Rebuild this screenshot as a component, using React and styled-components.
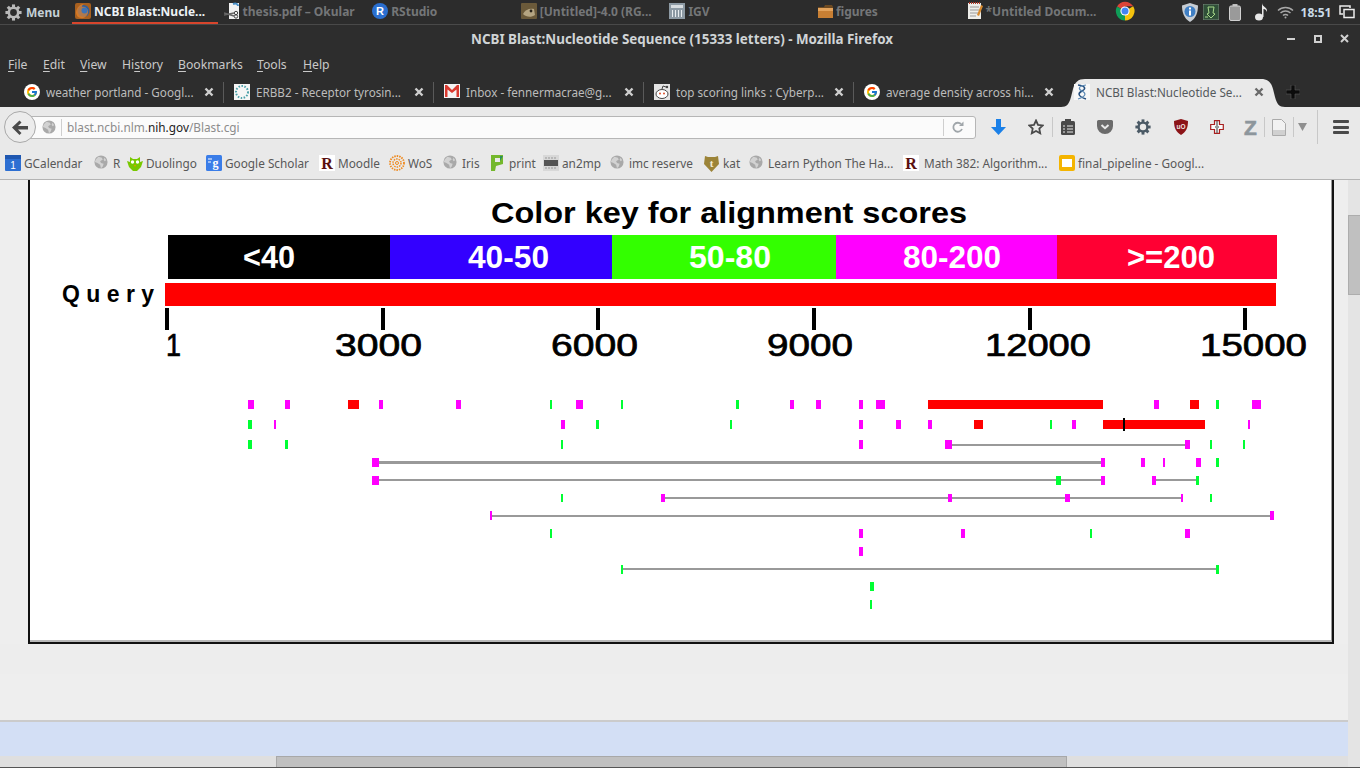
import React from 'react'
import styled, { createGlobalStyle } from 'styled-components'
import { FcGoogle } from 'react-icons/fc'

const Global = createGlobalStyle`
  html, body {
    margin: 0;
    padding: 0;
    overflow: hidden;
    background: #2d2d2d;
  }
`

const Screen = styled.div`
  display: flex;
  flex-direction: column;
  width: 1360px;
  height: 768px;
  overflow: hidden;
  font-family: 'Noto Sans', 'Open Sans', sans-serif;
`

/* desktop panel */
const Panel = styled.div`
  display: flex;
  align-items: center;
  height: 24px;
  background: #2c2c2c;
  border-bottom: 1px solid #494949;
  flex: none;
`
const MenuButton = styled.div`
  display: flex;
  align-items: center;
  gap: 4px;
  width: 72px;
  padding-left: 5px;
  box-sizing: border-box;
  font-size: 12px;
  font-weight: 700;
  color: #c4d0d6;
  flex: none;
`
const Task = styled.div`
  display: flex;
  align-items: center;
  gap: 3px;
  width: ${(p) => p.$w || 146}px;
  height: 24px;
  margin-right: 2.6px;
  box-sizing: border-box;
  padding-left: 3px;
  font-size: 12px;
  font-weight: 700;
  color: ${(p) => (p.$active ? '#eef3f6' : '#747678')};
  border-bottom: 2px solid ${(p) => (p.$active ? '#d8452c' : 'transparent')};
  white-space: nowrap;
  flex: none;
`
const Tray = styled.div`
  display: flex;
  align-items: center;
  margin-left: auto;
  padding-right: 2px;
  flex: none;
`
const TraySlot = styled.div`
  display: flex;
  align-items: center;
  justify-content: center;
  width: ${(p) => p.$w}px;
`
const Clock = styled.span`
  font-size: 12px;
  font-weight: 700;
  color: #c9dbe8;
`

/* firefox window */
const TitleBar = styled.div`
  display: flex;
  align-items: center;
  height: 27px;
  background: #2d2d2d;
  flex: none;
`
const WindowTitle = styled.div`
  width: 1278px;
  padding-left: 86px;
  box-sizing: border-box;
  text-align: center;
  font-size: 13.4px;
  font-weight: 700;
  color: #d0d4d6;
`
const WindowButton = styled.div`
  display: flex;
  align-items: center;
  justify-content: center;
  width: 26.5px;
`
const MenuBar = styled.div`
  display: flex;
  align-items: center;
  height: 26px;
  box-sizing: border-box;
  padding: 0 0 2px 8px;
  background: #2d2d2d;
  font-size: 12.2px;
  color: #c9c9c9;
  flex: none;
`
const MenuEntry = styled.span`
  width: ${(p) => p.$w}px;
  u {
    text-underline-offset: 2px;
  }
`
const TabStrip = styled.div`
  display: flex;
  height: 29px;
  padding-left: 14px;
  background: #2d2d2d;
  flex: none;
`
const Tab = styled.div`
  position: relative;
  display: flex;
  align-items: center;
  width: 210px;
  height: 28px;
  box-sizing: border-box;
  padding-left: 10px;
  font-size: 11.7px;
  color: ${(p) => (p.$active ? '#55595c' : '#bcbcbc')};
`
const TabShape = styled.svg`
  position: absolute;
  left: -3px;
  top: 0;
  width: 224px;
  height: 29px;
`
const TabIcon = styled.span`
  position: relative;
  display: flex;
  width: 16px;
  height: 16px;
  margin-right: 6px;
  flex: none;
`
const TabTitle = styled.span`
  position: relative;
  flex: 1;
  white-space: nowrap;
  overflow: hidden;
`
const TabClose = styled.svg`
  position: relative;
  width: 10px;
  height: 10px;
  margin-right: 9px;
  flex: none;
`
const TabDivider = styled.span`
  width: 1px;
  height: 21px;
  background: ${(p) => (p.$hidden ? 'transparent' : '#5a5a5a')};
  flex: none;
`
const NewTab = styled.div`
  display: flex;
  align-items: center;
  margin-left: 12px;
  height: 28px;
`

/* toolbar */
const NavBar = styled.div`
  display: flex;
  align-items: center;
  height: 41px;
  box-sizing: border-box;
  padding: 0 0 1px 4px;
  background: #e9e9e9;
  flex: none;
`
const BackButton = styled.div`
  position: relative;
  z-index: 1;
  display: flex;
  align-items: center;
  justify-content: center;
  width: 30px;
  height: 30px;
  border: 1px solid #a9a9a9;
  border-radius: 50%;
  background: #ececec;
  flex: none;
`
const UrlBar = styled.div`
  display: flex;
  align-items: center;
  width: 946px;
  height: 23px;
  margin-left: -6px;
  padding-left: 11px;
  box-sizing: border-box;
  background: #fbfbfb;
  border: 1px solid #b6b6b6;
  border-radius: 0 3px 3px 0;
  font-size: 11.8px;
  color: #8c8c8c;
  flex: none;
`
const UrlDivider = styled.span`
  width: 1px;
  height: 17px;
  margin: ${(p) => p.$margin};
  background: #cfcfcf;
  flex: none;
`
const UrlText = styled.span`
  flex: 1;
  margin-left: -1px;
  b {
    font-weight: 400;
    color: #222;
  }
`
const ToolSlot = styled.div`
  display: flex;
  align-items: center;
  justify-content: center;
  width: ${(p) => p.$w}px;
  flex: none;
`
const ToolDivider = styled.span`
  width: 1px;
  height: ${(p) => p.$h || 20}px;
  background: #c8c8c8;
  flex: none;
`
const ZLetter = styled.span`
  margin-left: 6px;
  font-family: 'Liberation Sans', sans-serif;
  font-size: 21px;
  font-weight: 700;
  line-height: 1;
  color: #8d969c;
  -webkit-text-stroke: 0.6px #8d969c;
`

/* bookmarks */
const Bookmarks = styled.div`
  display: flex;
  align-items: center;
  height: 32px;
  box-sizing: border-box;
  padding: 0 0 2px 5px;
  background: #e9e9e9;
  border-bottom: 1px solid #b4b4b4;
  font-size: 11.8px;
  color: #585858;
  flex: none;
`
const Bookmark = styled.div`
  display: flex;
  align-items: center;
  gap: ${(p) => p.$gap || 3}px;
  width: ${(p) => p.$w}px;
  white-space: nowrap;
  flex: none;
`
const Favicon = styled.span`
  display: flex;
  width: 16px;
  height: 16px;
  flex: none;
`

/* page */
const Viewport = styled.div`
  display: flex;
  flex: 1;
  min-height: 0;
`
const PageColumn = styled.div`
  display: flex;
  flex-direction: column;
  width: 1348px;
  flex: none;
`
const Page = styled.div`
  height: 540px;
  background: #eeeeee;
  flex: none;
`
const Frame = styled.div`
  width: 1306px;
  margin-left: 28px;
  box-sizing: border-box;
  background: #fff;
  border-left: 2px solid #111;
  border-right: 2px solid #111;
  border-bottom: 2px solid #111;
`
const Graphic = styled.svg`
  display: block;
  width: 1301px;
  height: 460px;
  border-right: 1px solid #9a9a9a;
  border-bottom: 2px solid #b9b9b9;
`
const PageBand = styled.div`
  height: 30px;
  background: #ededed;
`
const Footer = styled.div`
  height: 34px;
  background: #d3dff5;
  border-top: 2px solid #cbcbcb;
  flex: none;
`
const HScroll = styled.div`
  display: flex;
  height: 11px;
  padding-left: 276px;
  background: #dfdfdf;
  border-bottom: 1px solid #555;
  flex: none;
`
const HThumb = styled.div`
  width: 791px;
  background: #c0c0c0;
  border: 1px solid #a8a8a8;
  border-bottom: 0;
  box-sizing: border-box;
`
const VScroll = styled.div`
  flex: 1;
  padding-top: 35px;
  background: #e4e4e4;
  border-bottom: 1px solid #555;
`
const VThumb = styled.div`
  height: 80px;
  background: #c0c0c0;
  border: 1px solid #adadad;
  border-right: 0;
  box-sizing: border-box;
`

const KEY = [
  [168, 390, '#000000', '<40', 243, 52],
  [390, 612, '#3300ff', '40-50', 468, 81],
  [612, 836, '#33ff00', '50-80', 689, 82],
  [836, 1057, '#ff00ff', '80-200', 903, 98],
  [1057, 1277, '#ff0033', '>=200', 1127, 88],
]
const TICKS = [
  [167, '1', 166, 15],
  [383, '3000', 335, 87],
  [598, '6000', 551, 87],
  [814, '9000', 767, 86],
  [1030, '12000', 985, 106],
  [1245, '15000', 1200, 107],
]

const M = '#ff00ff'
const G = '#00ff33'
const R = '#ff0000'
// each row: top of the hits, grey connecting lines [x0, x1, y, h], hits [x0, x1, colour]
const ROWS = [
  { y: 400, lines: [], hits: [[248, 254, M], [285, 290, M], [348, 359, R], [379, 383, M], [456, 461, M], [550, 552, G], [576, 583, M], [621, 623, G], [736, 739, G], [790, 794, M], [816, 821, M], [859, 863, M], [876, 885, M], [928, 1103, R], [1154, 1159, M], [1190, 1199, R], [1216, 1219, G], [1252, 1261, M]] },
  { y: 420, lines: [], hits: [[248, 252, G], [274, 276, M], [561, 565, M], [596, 599, G], [730, 732, G], [859, 863, M], [896, 901, M], [928, 932, M], [974, 983, R], [1050, 1052, G], [1072, 1076, M], [1103, 1205, R], [1248, 1250, M]] },
  { y: 440, lines: [[952, 1185, 444, 2]], hits: [[248, 252, G], [285, 288, G], [561, 563, G], [859, 863, M], [945, 952, M], [1185, 1190, M], [1210, 1212, G], [1243, 1245, G]] },
  { y: 458, lines: [[379, 1101, 461, 3]], hits: [[372, 379, M], [1101, 1105, M], [1141, 1145, M], [1163, 1165, M], [1196, 1201, M], [1216, 1219, G]] },
  { y: 476, lines: [[379, 1101, 479, 2], [1156, 1196, 479, 2]], hits: [[372, 379, M], [1056, 1061, G], [1101, 1105, M], [1152, 1156, M], [1196, 1199, G]] },
  { y: 494, h: 8, lines: [[665, 1181, 497, 2]], hits: [[561, 563, G], [661, 665, M], [948, 952, M], [1065, 1070, M], [1181, 1183, M], [1210, 1212, G]] },
  { y: 511, lines: [[492, 1270, 515, 2]], hits: [[490, 492, M], [1270, 1274, M]] },
  { y: 529, lines: [], hits: [[550, 552, G], [859, 863, M], [961, 965, M], [1090, 1092, G], [1185, 1190, M]] },
  { y: 547, lines: [], hits: [[859, 863, M]] },
  { y: 565, lines: [[623, 1216, 568, 2]], hits: [[621, 623, G], [1216, 1219, G]] },
  { y: 582, lines: [], hits: [[870, 874, G]] },
  { y: 600, lines: [], hits: [[870, 872, G]] },
]

const HEAVY = { fontFamily: "'Liberation Sans', sans-serif", fontWeight: 700 }

function AlignmentGraphic() {
  return (
    <Graphic viewBox="30 180 1301 460" shapeRendering="crispEdges">
      <text x="491" y="223" fontSize="29" textLength="476" lengthAdjust="spacingAndGlyphs" style={HEAVY}>
        Color key for alignment scores
      </text>
      {KEY.map(([x0, x1, fill, label, tx, tw]) => (
        <g key={label}>
          <rect x={x0} y="235" width={x1 - x0} height="44" fill={fill} />
          <text x={tx} y="268" fontSize="32" fill="#fff" textLength={tw} lengthAdjust="spacingAndGlyphs" style={HEAVY}>
            {label}
          </text>
        </g>
      ))}
      <text x="62" y="302" fontSize="23" textLength="92" lengthAdjust="spacing" style={HEAVY}>
        Query
      </text>
      <rect x="165" y="283" width="1111" height="23" fill="#ff0000" />
      {TICKS.map(([x, label, tx, tw]) => (
        <g key={label}>
          <rect x={x - 2} y="308" width="4" height="22" fill="#000" />
          <text
            x={tx}
            y="356"
            fontSize="31"
            stroke="#000"
            strokeWidth="0.7"
            textLength={tw}
            lengthAdjust="spacingAndGlyphs"
            fontFamily="'Liberation Sans', sans-serif"
          >
            {label}
          </text>
        </g>
      ))}
      {ROWS.map((row) => (
        <g key={row.y}>
          {row.lines.map(([x0, x1, y, h]) => (
            <rect key={x0} x={x0} y={y} width={x1 - x0} height={h} fill="#999999" />
          ))}
          {row.hits.map(([x0, x1, fill]) => (
            <rect key={x0} x={x0} y={row.y} width={x1 - x0} height={row.h || 9} fill={fill} />
          ))}
        </g>
      ))}
      <rect x="1123" y="418" width="2" height="13" fill="#000" />
    </Graphic>
  )
}

/* icons */
const Globe = ({ size = 14 }) => (
  <svg width={size} height={size} viewBox="0 0 16 16">
    <circle cx="8" cy="8" r="7.5" fill="#a9a9a9" />
    <path d="M5 2l4 1 1 2-3 2 1 2 3 1-1 3-2 2-1-4-3-2-3-1 1-3z" fill="#d2d2d2" />
    <path d="M12 3l2 3-2 1-1-2z" fill="#d2d2d2" />
  </svg>
)
const Gear = ({ size = 17, color = '#b9b9b9' }) => (
  <svg width={size} height={size} viewBox="0 0 20 20">
    <circle cx="10" cy="10" r="5.5" fill="none" stroke={color} strokeWidth="3" />
    {[0, 45, 90, 135, 180, 225, 270, 315].map((a) => (
      <rect key={a} x="8.2" y="0.5" width="3.6" height="4" fill={color} transform={`rotate(${a} 10 10)`} />
    ))}
  </svg>
)
const Firefox = () => (
  <svg width="16" height="16" viewBox="0 0 16 16">
    <rect width="16" height="16" rx="2" fill="#a8601f" />
    <circle cx="8.500" cy="8" r="6" fill="#2f5f9e" />
    <path d="M1 9c1-5 4-8 8-8-2 1-2 2-2 3 3-1 7 2 6 6-1 3-4 6-7 5-3 0-5-3-5-6z" fill="#e8842a" opacity=".7" />
    <circle cx="9.500" cy="7.500" r="3" fill="#3f73b5" />
  </svg>
)
const Okular = () => (
  <svg width="16" height="18" viewBox="0 0 16 18">
    <path d="M5 1h10v16H5z" fill="#f2f2f2" />
    <path d="M9 2c3-1 5 0 5 2" fill="none" stroke="#4a90c8" strokeWidth="2" />
    <path d="M0 13l10-2M0 11l10 3" stroke="#666" strokeWidth="1.4" />
    <circle cx="12" cy="11" r="1.7" fill="none" stroke="#444" />
    <circle cx="12" cy="14.500" r="1.7" fill="none" stroke="#444" />
  </svg>
)
const RBadge = () => (
  <svg width="16" height="16" viewBox="0 0 16 16">
    <circle cx="8" cy="8" r="8" fill="#2a6fd0" />
    <text x="8" y="12" fontSize="11" fontWeight="700" textAnchor="middle" fill="#fff" fontFamily="'Liberation Sans', sans-serif">
      R
    </text>
  </svg>
)
const Gimp = () => (
  <svg width="16" height="16" viewBox="0 0 16 16">
    <rect width="16" height="16" rx="1" fill="#6b5a3a" />
    <path d="M2 11c2-4 6-6 11-5l1 6c-4 3-9 2-12-1z" fill="#b5a582" />
    <circle cx="10" cy="8" r="1.4" fill="#2a241a" />
  </svg>
)
const Igv = () => (
  <svg width="16" height="16" viewBox="0 0 16 16">
    <rect width="16" height="16" fill="#8d9aa4" />
    <rect x="2" y="2" width="12" height="3" fill="#d8dde0" />
    <path d="M3 7h1v7H3zM6 7h1v7H6zM9 7h1v7H9zM12 7h1v7h-1z" fill="#e8ecef" />
  </svg>
)
const Folder = () => (
  <svg width="15" height="15" viewBox="0 0 15 15">
    <path d="M0 3h6l1-2h7l1 2v11H0z" fill="#6d4a22" />
    <rect y="4" width="15" height="10" fill="#c87f33" />
    <rect y="4" width="15" height="3" fill="#e3a35c" />
  </svg>
)
const Notes = () => (
  <svg width="16" height="18" viewBox="0 0 16 18">
    <rect x="1" y="1" width="13" height="16" fill="#eeeeea" />
    <path d="M3 5h9M3 8h9M3 11h9M3 14h6" stroke="#9a9a9a" />
    <path d="M10 13l4-10 2 1-4 10z" fill="#d88a2e" />
    <path d="M2 1h11" stroke="#b03a2a" strokeWidth="2" strokeDasharray="1 1" />
  </svg>
)
const Chrome = () => (
  <svg width="20" height="20" viewBox="0 0 20 20">
    <path d="M10 10L2 5.400A9.500 9.500 0 0 1 18.200 5.200H10z" fill="#db4437" />
    <path d="M10 10l8.200-4.800A9.500 9.500 0 0 1 10 19.500z" fill="#f4c20d" />
    <path d="M10 10v9.500A9.500 9.500 0 0 1 2 5.400z" fill="#0f9d58" />
    <circle cx="10" cy="10" r="4.600" fill="#fff" />
    <circle cx="10" cy="10" r="3.500" fill="#4285f4" />
  </svg>
)
const InfoShield = () => (
  <svg width="16" height="19" viewBox="0 0 16 19">
    <path d="M8 0l8 2.500c0 7-2 13-8 16.500C2 15.500 0 9.500 0 2.500z" fill="#c6ccd2" />
    <circle cx="8" cy="8.500" r="5.500" fill="#3f7fc4" />
    <path d="M7 4.500h2v2H7zM7 7.500h2v5H7z" fill="#fff" />
  </svg>
)
const GreenTray = () => (
  <svg width="16" height="16" viewBox="0 0 16 16">
    <rect width="16" height="16" fill="#2f4f38" stroke="#7b8a7c" />
    <path d="M5 3h6l-1 6 2 1-4 4-4-4 2-1z" fill="none" stroke="#a8d98a" />
    <path d="M2 13h3" stroke="#a8d98a" />
  </svg>
)
const Battery = () => (
  <svg width="12" height="17" viewBox="0 0 12 17">
    <rect x="3.500" y="0" width="5" height="2" fill="#bcbcbc" />
    <rect x="0.500" y="2" width="11" height="14.500" rx="1.500" fill="#9a9a9a" stroke="#d0d0d0" />
  </svg>
)
const Note = () => (
  <svg width="13" height="18" viewBox="0 0 13 18">
    <ellipse cx="4" cy="14" rx="4" ry="3.500" fill="#e8e8e8" />
    <path d="M7 14V0c0 4 6 4 5 9-1-3-3-3-3.500-3V14z" fill="#e8e8e8" />
  </svg>
)
const WifiIcon = () => (
  <svg width="17" height="13" viewBox="0 0 17 13" fill="none" stroke="#a8a8a8" strokeWidth="1.500">
    <path d="M1 4.500a11 11 0 0 1 15 0M3.500 7a7.500 7.500 0 0 1 10 0M6 9.500a3.500 3.500 0 0 1 5 0" />
    <circle cx="8.500" cy="11.500" r="1" fill="#a8a8a8" stroke="none" />
  </svg>
)
const Windows = () => (
  <svg width="16" height="14" viewBox="0 0 16 14" fill="none" stroke="#ececec" strokeWidth="1.500">
    <path d="M11 3V1H1v8h3" />
    <rect x="5" y="4.500" width="10" height="8" />
  </svg>
)
const Close = ({ color = '#cfcfcf' }) => (
  <TabClose viewBox="0 0 10 10">
    <path d="M1.500 1.500l7 7M8.500 1.500l-7 7" stroke={color} strokeWidth="2.400" />
  </TabClose>
)
const GoogleG = () => (
  <svg width="16" height="16" viewBox="0 0 16 16">
    <circle cx="8" cy="8" r="8" fill="#fff" />
    <foreignObject x="2" y="2" width="12" height="12">
      <FcGoogle size={12} style={{ display: 'block' }} />
    </foreignObject>
  </svg>
)
const Erbb = () => (
  <svg width="16" height="16" viewBox="0 0 16 16">
    <rect width="16" height="16" fill="#f6f6f6" />
    <circle cx="8" cy="8" r="6" fill="none" stroke="#4aa0a8" strokeWidth="2" strokeDasharray="1.500 1.500" />
  </svg>
)
const Gmail = () => (
  <svg width="16" height="14" viewBox="0 0 16 14">
    <rect width="16" height="14" fill="#f4f4f4" />
    <path d="M1 1h2l5 5 5-5h2v12h-2.500V5.500L8 9 3.500 5.500V13H1z" fill="#d93a30" />
  </svg>
)
const Reddit = () => (
  <svg width="16" height="16" viewBox="0 0 16 16">
    <rect width="16" height="16" fill="#e4e4e4" />
    <ellipse cx="8" cy="10" rx="6" ry="4.500" fill="#fff" stroke="#444" />
    <circle cx="6" cy="9.500" r="1" fill="#d9502c" />
    <circle cx="10" cy="9.500" r="1" fill="#d9502c" />
    <path d="M8 5l1-3 3 1" fill="none" stroke="#444" />
    <circle cx="13" cy="3" r="1.200" fill="#444" />
  </svg>
)
const Helix = () => (
  <svg width="16" height="16" viewBox="0 0 16 16">
    <rect width="16" height="16" fill="#f8f8f8" />
    <path d="M4 1c8 1 8 4 4 6s-5 5 4 8" fill="none" stroke="#27507f" strokeWidth="1.500" />
    <path d="M12 1C4 2 4 5 8 7s5 5-4 8" fill="none" stroke="#5e8bb5" strokeWidth="1.200" />
  </svg>
)
const PlusBlack = () => (
  <svg width="14" height="14" viewBox="0 0 14 14">
    <path d="M5 0h4v5h5v4H9v5H5V9H0V5h5z" fill="#0c0c0c" stroke="#5a5a5a" strokeWidth=".6" />
  </svg>
)
const ArrowBack = () => (
  <svg width="16" height="15" viewBox="0 0 16 15">
    <path d="M7.500 0.500l2 2-3.500 3.500H16v3.500H6l3.500 3.500-2 2L0 7.500z" fill="#4a4a4a" />
  </svg>
)
const Reload = () => (
  <svg width="12" height="13" viewBox="0 0 12 13" fill="none">
    <path d="M10 8a4.500 4.500 0 1 1-1-5" stroke="#a0a6aa" strokeWidth="1.800" />
    <path d="M7 5h4.500V0.500z" fill="#a0a6aa" />
  </svg>
)
const DownloadArrow = () => (
  <svg width="15" height="16" viewBox="0 0 15 16">
    <path d="M5 0h5v8h5l-7.500 8L0 8h5z" fill="#1a80e8" />
  </svg>
)
const Star = () => (
  <svg width="16" height="16" viewBox="0 0 16 16">
    <path
      d="M8 1.500l2 4.300 4.700.6-3.400 3.200.9 4.700L8 12l-4.200 2.300.9-4.700L1.300 6.400 6 5.800z"
      fill="none"
      stroke="#4a4a4a"
      strokeWidth="1.800"
    />
  </svg>
)
const Clipboard = () => (
  <svg width="14" height="16" viewBox="0 0 14 16">
    <rect y="2" width="14" height="14" rx="1.500" fill="#4a4a4a" />
    <rect x="4" width="6" height="4" fill="#4a4a4a" />
    <path d="M2 7h2M6 7h6M2 10h2M6 10h6M2 13h2M6 13h6" stroke="#e9e9e9" />
  </svg>
)
const Pocket = () => (
  <svg width="16" height="14" viewBox="0 0 16 14">
    <path d="M0 1.500A1.500 1.500 0 0 1 1.500 0h13A1.500 1.500 0 0 1 16 1.500V6a8 8 0 0 1-16 0z" fill="#6b6b6b" />
    <path d="M4.500 5L8 8.200 11.500 5" fill="none" stroke="#e9e9e9" strokeWidth="2" />
  </svg>
)
const UBlock = () => (
  <svg width="14" height="16" viewBox="0 0 14 16">
    <path d="M7 0l7 2c0 7-2 11-7 14C2 13 0 9 0 2z" fill="#8c1418" />
    <text x="7" y="10" fontSize="6.500" fontWeight="700" textAnchor="middle" fill="#f2e4e4" fontFamily="'Liberation Sans', sans-serif">
      uO
    </text>
  </svg>
)
const RedCross = () => (
  <svg width="14" height="14" viewBox="0 0 14 14">
    <path d="M4.500 .7h5v3.800h3.800v5H9.500v3.800h-5V9.500H.7v-5h3.800z" fill="#fafafa" stroke="#a82020" strokeWidth="1.200" />
    <path d="M7 1v12" stroke="#555" strokeWidth="1.200" />
    <rect x="5" y="6" width="4" height="2" fill="#999" />
  </svg>
)
const PageIcon = () => (
  <svg width="14" height="17" viewBox="0 0 14 17">
    <path d="M.5.500h9l4 4v12H.5z" fill="#f2f2f2" stroke="#aaa" />
    <path d="M1 11h12v5H1z" fill="#d0d0d0" />
  </svg>
)
const Triangle = () => (
  <svg width="9" height="8" viewBox="0 0 9 8">
    <path d="M0 0h9L4.500 8z" fill="#8f8f8f" />
  </svg>
)
const HamburgerBar = styled.span`
  display: block;
  width: 16px;
  height: 3px;
  border-radius: 1px;
  background: #4a4a4a;
`
const HamburgerStack = styled.div`
  display: flex;
  flex-direction: column;
  gap: 2.500px;
`
const RLogo = () => (
  <svg width="16" height="16" viewBox="0 0 16 16">
    <rect width="16" height="16" fill="#fff" />
    <text x="8" y="14" fontSize="16" fontWeight="700" textAnchor="middle" fill="#5a1010" fontFamily="'Liberation Serif', serif">
      R
    </text>
  </svg>
)
const Calendar = () => (
  <svg width="16" height="16" viewBox="0 0 16 16">
    <rect width="16" height="16" rx="1" fill="#2d6fd2" />
    <rect width="16" height="4" fill="#1f57b0" />
    <text x="8" y="14" fontSize="10" textAnchor="middle" fill="#fff" fontFamily="'Liberation Sans', sans-serif">
      1
    </text>
  </svg>
)
const Duolingo = () => (
  <svg width="16" height="16" viewBox="0 0 16 16">
    <path d="M0 6l3 1V2l3 2h4l3-2v5l3-1-2 6-4 4H6l-4-4z" fill="#78c800" />
    <circle cx="5.500" cy="7" r="1.700" fill="#fff" />
    <circle cx="10.500" cy="7" r="1.700" fill="#fff" />
    <path d="M7 10h2l-1 2z" fill="#f49000" />
  </svg>
)
const Scholar = () => (
  <svg width="16" height="16" viewBox="0 0 16 16">
    <rect width="16" height="16" rx="1.500" fill="#3a7de8" />
    <text x="9.500" y="12" fontSize="12" fontWeight="700" textAnchor="middle" fill="#fff" fontFamily="'Liberation Serif', serif">
      g
    </text>
    <path d="M2 4h4M2 7h3" stroke="#fff" />
  </svg>
)
const Wos = () => (
  <svg width="16" height="16" viewBox="0 0 16 16" fill="none" stroke="#ef8a1f">
    <circle cx="8" cy="8" r="7" strokeWidth="1.800" strokeDasharray="1.500 1" />
    <circle cx="8" cy="8" r="4" strokeWidth="1.500" strokeDasharray="1.500 1" />
    <circle cx="8" cy="8" r="1.500" />
  </svg>
)
const Print = () => (
  <svg width="14" height="16" viewBox="0 0 14 16">
    <path d="M1 0h12v9L6 11l-1 5H1z" fill="#74b82c" />
    <path d="M5 3h5v4H5z" fill="#e9e9e9" />
    <path d="M10 1l3 0-3 5z" fill="#2c8f5a" />
  </svg>
)
const An2mp = () => (
  <svg width="16" height="16" viewBox="0 0 16 16">
    <rect width="16" height="16" fill="#d8d8d8" />
    <rect x="1" y="5" width="14" height="6" fill="#555" />
    <path d="M2 3h12M2 13h12" stroke="#999" strokeDasharray="2 1" />
  </svg>
)
const Kat = () => (
  <svg width="15" height="17" viewBox="0 0 15 17">
    <path d="M1 1l3 1h7l3-1 1 8-7.500 8L0 9z" fill="#9c8438" />
    <text x="7.500" y="12" fontSize="11" fontWeight="700" textAnchor="middle" fill="#f2ecd6" fontFamily="'Liberation Serif', serif">
      t
    </text>
  </svg>
)
const Slides = () => (
  <svg width="16" height="16" viewBox="0 0 16 16">
    <rect width="16" height="16" rx="2" fill="#f4b400" />
    <rect x="3" y="4" width="10" height="8" fill="#fff" />
  </svg>
)

const TASKS = [
  [<Firefox key="i" />, 'NCBI Blast:Nucle...', true],
  [<Okular key="i" />, 'thesis.pdf – Okular'],
  [<RBadge key="i" />, 'RStudio'],
  [<Gimp key="i" />, '[Untitled]-4.0 (RG...'],
  [<Igv key="i" />, 'IGV'],
  [<Folder key="i" />, 'figures'],
  [<Notes key="i" />, '*Untitled Docum...'],
  [<Chrome key="i" />, '', false, 40],
]
const MENUS = [
  [35, 'F', 'ile'],
  [37, 'E', 'dit'],
  [42, 'V', 'iew'],
  [56, 'Hi', 'story', 's'],
  [79, 'B', 'ookmarks'],
  [46, 'T', 'ools'],
  [30, 'H', 'elp'],
]
const TABS = [
  [<GoogleG key="i" />, 'weather portland - Googl...'],
  [<Erbb key="i" />, 'ERBB2 - Receptor tyrosin...'],
  [<Gmail key="i" />, 'Inbox - fennermacrae@g...'],
  [<Reddit key="i" />, 'top scoring links : Cyberp...'],
  [<GoogleG key="i" />, 'average density across hi...'],
]
const BOOKMARKS = [
  [<Calendar key="i" />, 'GCalendar', 89],
  [<Globe key="i" />, 'R', 33],
  [<Duolingo key="i" />, 'Duolingo', 79],
  [<Scholar key="i" />, 'Google Scholar', 113],
  [<RLogo key="i" />, 'Moodle', 70],
  [<Wos key="i" />, 'WoS', 54],
  [<Globe key="i" />, 'Iris', 47],
  [<Print key="i" />, 'print', 53],
  [<An2mp key="i" />, 'an2mp', 67],
  [<Globe key="i" />, 'imc reserve', 94],
  [<Kat key="i" />, 'kat', 45],
  [<Globe key="i" />, 'Learn Python The Ha...', 154],
  [<RLogo key="i" />, 'Math 382: Algorithm...', 156, 5],
  [<Slides key="i" />, 'final_pipeline - Googl...', 150],
]

export default function App() {
  return (
    <Screen>
      <Global />
      <Panel>
        <MenuButton>
          <Gear />
          Menu
        </MenuButton>
        {TASKS.map(([icon, label, active, w], index) => (
          <Task key={index} $active={active} $w={w}>
            {icon}
            {label}
          </Task>
        ))}
        <Tray>
          <TraySlot $w={20}><InfoShield /></TraySlot>
          <TraySlot $w={22}><GreenTray /></TraySlot>
          <TraySlot $w={26}><Battery /></TraySlot>
          <TraySlot $w={26}><Note /></TraySlot>
          <TraySlot $w={22}><WifiIcon /></TraySlot>
          <TraySlot $w={40}><Clock>18:51</Clock></TraySlot>
          <TraySlot $w={22}><Windows /></TraySlot>
        </Tray>
      </Panel>
      <TitleBar>
        <WindowTitle>NCBI Blast:Nucleotide Sequence (15333 letters) - Mozilla Firefox</WindowTitle>
        <WindowButton>
          <svg width="8" height="2"><rect width="8" height="2" fill="#d0d0d0" /></svg>
        </WindowButton>
        <WindowButton>
          <svg width="8" height="8"><rect x="1" y="1" width="6" height="6" fill="none" stroke="#d0d0d0" strokeWidth="2" /></svg>
        </WindowButton>
        <WindowButton>
          <svg width="9" height="9"><path d="M1 1l7 7M8 1l-7 7" stroke="#d0d0d0" strokeWidth="2" /></svg>
        </WindowButton>
      </TitleBar>
      <MenuBar>
        {MENUS.map(([w, first, rest, mid]) => (
          <MenuEntry key={first + rest} $w={w}>
            {mid ? (
              <>
                {first}
                <u>{mid}</u>
                {rest.slice(1)}
              </>
            ) : (
              <>
                <u>{first}</u>
                {rest}
              </>
            )}
          </MenuEntry>
        ))}
      </MenuBar>
      <TabStrip>
        {TABS.map(([icon, title], index) => (
          <Tab key={index}>
            <TabIcon>{icon}</TabIcon>
            <TabTitle>{title}</TabTitle>
            <Close />
            <TabDivider $hidden={index === 4} />
          </Tab>
        ))}
        <Tab $active>
          <TabShape viewBox="0 0 224 29">
            <path
              d="M0 29c6 0 8-3 10-10l2-8C14 4 17 1 24 1h176c7 0 10 3 12 10l2 8c2 7 4 10 10 10z"
              fill="#e9e9e9"
            />
          </TabShape>
          <TabIcon><Helix /></TabIcon>
          <TabTitle>NCBI Blast:Nucleotide Se...</TabTitle>
          <Close color="#6a6a6a" />
          <TabDivider $hidden />
        </Tab>
        <NewTab><PlusBlack /></NewTab>
      </TabStrip>
      <NavBar>
        <BackButton><ArrowBack /></BackButton>
        <UrlBar>
          <Globe />
          <UrlDivider $margin="0 6px 0 5px" />
          <UrlText>
            blast.ncbi.nlm.<b>nih.gov</b>/Blast.cgi
          </UrlText>
          <UrlDivider />
          <ToolSlot $w={28}><Reload /></ToolSlot>
          <ToolSlot $w={3} />
        </UrlBar>
        <ToolSlot $w={44}><DownloadArrow /></ToolSlot>
        <ToolSlot $w={32}><Star /></ToolSlot>
        <ToolDivider />
        <ToolSlot $w={30}><Clipboard /></ToolSlot>
        <ToolSlot $w={44}><Pocket /></ToolSlot>
        <ToolSlot $w={32}><Gear size={16} color="#4b5a66" /></ToolSlot>
        <ToolSlot $w={44}><UBlock /></ToolSlot>
        <ToolSlot $w={28}><RedCross /></ToolSlot>
        <ToolSlot $w={33}><ZLetter>Z</ZLetter></ToolSlot>
        <ToolDivider />
        <ToolSlot $w={28}><PageIcon /></ToolSlot>
        <ToolDivider />
        <ToolSlot $w={16}><Triangle /></ToolSlot>
        <ToolSlot $w={7} />
        <ToolDivider $h={34} />
        <ToolSlot $w={45}>
          <HamburgerStack>
            <HamburgerBar />
            <HamburgerBar />
            <HamburgerBar />
          </HamburgerStack>
        </ToolSlot>
      </NavBar>
      <Bookmarks>
        {BOOKMARKS.map(([icon, label, w, gap]) => (
          <Bookmark key={label} $w={w} $gap={gap}>
            <Favicon>{icon}</Favicon>
            {label}
          </Bookmark>
        ))}
      </Bookmarks>
      <Viewport>
        <PageColumn>
          <Page>
            <Frame>
              <AlignmentGraphic />
            </Frame>
            <PageBand />
          </Page>
          <Footer />
          <HScroll><HThumb /></HScroll>
        </PageColumn>
        <VScroll><VThumb /></VScroll>
      </Viewport>
    </Screen>
  )
}
